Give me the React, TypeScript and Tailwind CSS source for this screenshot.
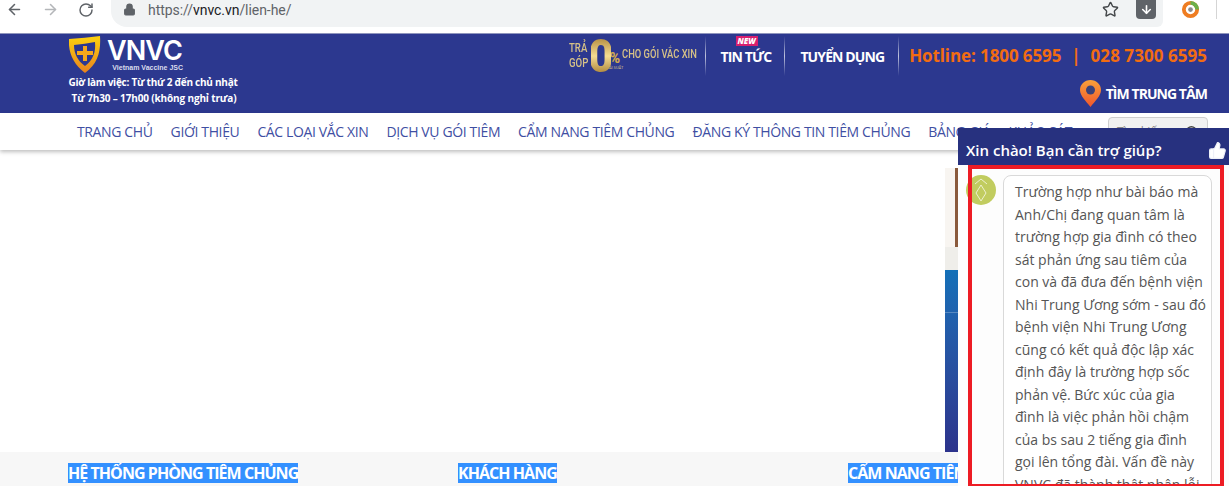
import React from "react";
import { ArrowLeft, ArrowRight, RotateCw, Lock, Star, ArrowDown, Search, ThumbsUp } from "lucide-react";

const navItems = [
  "TRANG CHỦ",
  "GIỚI THIỆU",
  "CÁC LOẠI VẮC XIN",
  "DỊCH VỤ GÓI TIÊM",
  "CẨM NANG TIÊM CHỦNG",
  "ĐĂNG KÝ THÔNG TIN TIÊM CHỦNG",
  "BẢNG GIÁ",
  "KHẢO SÁT",
];

const chatLines = [
  "Trường hợp như bài báo mà",
  "Anh/Chị đang quan tâm là",
  "trường hợp gia đình có theo",
  "sát phản ứng sau tiêm của",
  "con và đã đưa đến bệnh viện",
  "Nhi Trung Ương sớm - sau đó",
  "bệnh viện Nhi Trung Ương",
  "cũng có kết quả độc lập xác",
  "định đây là trường hợp sốc",
  "phản vệ. Bức xúc của gia",
  "đình là việc phản hồi chậm",
  "của bs sau 2 tiếng gia đình",
  "gọi lên tổng đài. Vấn đề này",
  "VNVC đã thành thật nhận lỗi",
];

const footerCols = ["HỆ THỐNG PHÒNG TIÊM CHỦNG", "KHÁCH HÀNG", "CẨM NANG TIÊM CHỦNG"];

const Shield = () => (
  <svg width="32" height="37" viewBox="0 0 32 37" className="shrink-0 ml-[1px]">
    <defs>
      <linearGradient id="shieldGold" x1="0" y1="0" x2="0" y2="1">
        <stop offset="0" stopColor="#fdd20e" />
        <stop offset="1" stopColor="#e8821e" />
      </linearGradient>
    </defs>
    <path d="M0 3 Q16 2 31 0 C32 15 29 28 16 37 C4 28 -1 16 0 3 Z" fill="url(#shieldGold)" />
    <path d="M5 9 Q16 8 26 6 C27 16 24 24 16 30 C9 25 5 18 5 9 Z" fill="#2c388f" />
    <path d="M14 10 h4 v5 h6 v4 h-6 v6 h-4 v-6 h-6 v-4 h6 Z" fill="#f5a81c" />
  </svg>
);

const Pin = () => (
  <svg width="21" height="27" viewBox="0 0 21 27" className="shrink-0">
    <defs>
      <linearGradient id="pinGrad" x1="0" y1="0" x2="0" y2="1">
        <stop offset="0" stopColor="#f9a13a" />
        <stop offset="1" stopColor="#f0562c" />
      </linearGradient>
    </defs>
    <path d="M10.5 0 C4.5 0 0 4.5 0 10 C0 16 6 21 10.5 27 C15 21 21 16 21 10 C21 4.5 16.5 0 10.5 0 Z" fill="url(#pinGrad)" />
    <circle cx="10.5" cy="10" r="4.5" fill="#3b4279" />
  </svg>
);

const ExtensionIcon = () => (
  <svg width="19" height="19" viewBox="0 0 20 20">
    <circle cx="10" cy="10" r="7" fill="none" stroke="#ef7d22" strokeWidth="4" />
    <path d="M10 3 A7 7 0 0 1 17 10" fill="none" stroke="#6bb04a" strokeWidth="4" />
    <circle cx="10" cy="10" r="2.5" fill="#8a8a8a" />
  </svg>
);

const AvatarMark = () => (
  <svg width="14" height="24" viewBox="0 0 14 24" fill="none" stroke="#eef0cf" strokeWidth="1">
    <path d="M1 6 L7 1 L13 6" />
    <path d="M7 7 L12 15 L7 23 L2 15 Z" />
  </svg>
);

const Divider = () => (
  <div className="w-px h-10 bg-gradient-to-b from-transparent via-white/70 to-transparent shrink-0" />
);

const BrowserBar = () => (
  <div className="h-[33px] bg-white flex items-start text-[#5f6368] shrink-0">
    <div className="flex items-center h-[19px] pl-[6px] w-[111px] shrink-0">
      <ArrowLeft size={17} strokeWidth={2.2} />
      <ArrowRight size={17} strokeWidth={2.2} className="ml-[19px] text-[#b4b6b9]" />
      <RotateCw size={16} strokeWidth={2.2} className="ml-[19px]" />
    </div>
    <div className="w-[1052px] h-[27px] bg-[#f1f3f4] rounded-bl-2xl rounded-br-md flex items-start shrink-0">
      <Lock size={13} fill="#5f6368" className="ml-[12px] mt-[3px]" />
      <span className="ml-[12px] mt-[1px] text-[14px] leading-[18px] tracking-[-0.05px] font-['Roboto',sans-serif]">
        https://<span className="text-[#202124]">vnvc.vn</span>/lien-he/
      </span>
      <Star size={17} strokeWidth={2} className="ml-auto mt-[1px] mr-[17px] text-[#44474a]" />
      <div className="w-5 h-[19px] bg-[#5f6368] rounded-b-sm flex items-center justify-center mr-[7px]">
        <ArrowDown size={13} strokeWidth={3} className="text-white" />
      </div>
    </div>
    <div className="ml-[18px] h-[19px] flex items-center">
      <ExtensionIcon />
    </div>
    <div className="ml-[16px] w-px h-[19px] bg-[#d5d5d5]" />
  </div>
);

const TopHeader = () => (
  <div className="h-[80px] bg-[#2c388f] border-t border-[#8f95bd] flex justify-between shrink-0 text-white font-['Open_Sans',sans-serif]">
    <div className="ml-[68px] pt-[2px]">
      <div className="flex items-start h-[38px]">
        <Shield />
        <div className="ml-[6px] w-[76px]">
          <div className="text-[27px] leading-[26px] font-semibold tracking-[-0.9px] font-['Inter',sans-serif] mt-[2px]">VNVC</div>
          <div className="text-[7px] leading-[8px] font-bold text-right text-[#d9dcec] font-['Liberation_Sans',sans-serif] whitespace-nowrap">Vietnam Vaccine JSC</div>
        </div>
      </div>
      <div className="text-[10px] leading-[16px] font-bold text-center tracking-[-0.25px] whitespace-nowrap w-[170px]">
        <div>Giờ làm việc: Từ thứ 2 đến chủ nhật</div>
        <div className="pl-[2px] tracking-[-0.14px]">Từ 7h30 – 17h00 (không nghỉ trưa)</div>
      </div>
    </div>
    <div className="pr-[22px] flex flex-col items-end">
      <div className="flex items-center h-[42px] mt-[1px]">
        <div className="flex items-center text-[#d6c187] font-['Roboto',sans-serif] w-[128px] h-[36px]">
          <div className="text-[12px] leading-[15px] text-center scale-x-[.8] font-medium w-[20px] shrink-0 -ml-[1px]">TRẢ<br />GÓP</div>
          <span className="ml-[3px] w-[22px] flex justify-center shrink-0 scale-x-95 text-[46px] leading-[38px] font-black bg-gradient-to-b from-[#b08a3c] via-[#f5dc92] to-[#a87f30] bg-clip-text text-transparent">0</span>
          <div className="flex flex-col items-center w-[13px] shrink-0 -ml-[3px] mt-[8px]">
            <span className="text-[14px] leading-[14px] font-black text-[#d0a850]">%</span>
            <span className="text-[4px] leading-[5px] whitespace-nowrap">LÃI SUẤT</span>
          </div>
          <span className="text-[12px] ml-[3px] mb-[4px] w-[69px] shrink-0 scale-x-[.78] whitespace-nowrap font-medium flex justify-center">CHO GÓI VẮC XIN</span>
        </div>
        <div className="ml-[9px]"><Divider /></div>
        <div className="relative ml-[15px] text-[14px] font-bold tracking-[-0.9px] whitespace-nowrap">
          TIN TỨC
          <span className="absolute -top-[10px] left-[15px] bg-[#d81f6e] text-white text-[8px] leading-[10px] font-black px-[2px] tracking-normal italic">NEW</span>
        </div>
        <div className="ml-[13px]"><Divider /></div>
        <div className="ml-[15px] text-[14px] font-bold tracking-[-0.9px] whitespace-nowrap">TUYỂN DỤNG</div>
        <div className="ml-[14px]"><Divider /></div>
        <div className="ml-[10px] text-[#f26c12] text-[17px] font-bold flex whitespace-nowrap tracking-[-0.1px]">
          <span>Hotline: 1800 6595</span>
          <span className="mx-[10px]">|</span>
          <span className="tracking-[0.05px]">028 7300 6595</span>
        </div>
      </div>
      <div className="flex items-center mt-[3px]">
        <Pin />
        <span className="ml-[5px] mb-[1px] text-[14px] font-bold tracking-[-0.95px] whitespace-nowrap">TÌM TRUNG TÂM</span>
      </div>
    </div>
  </div>
);

const NavBar = () => (
  <div className="h-[37px] bg-white shadow-[0_2px_4px_rgba(0,0,0,0.25)] flex items-center pl-[77px] pr-[21px] shrink-0 relative font-['Open_Sans',sans-serif]">
    <div className="flex gap-[18px] text-[14px] tracking-[-0.37px] text-[#3f4fa3] whitespace-nowrap">
      {navItems.map((item) => (
        <span key={item}>{item}</span>
      ))}
    </div>
    <div className="ml-auto w-[100px] h-[30px] shrink-0 bg-[#f1f1f1] border border-[#cfcfcf] rounded flex items-center justify-between px-[8px] text-[12px] text-[#888]">
      <span>Tìm kiếm</span>
      <Search size={14} strokeWidth={2.5} className="text-[#444]" />
    </div>
  </div>
);

const Footer = () => (
  <div className="h-[34px] bg-[#f7f7f7] grid grid-cols-[390px_390px_390px] pl-[68px] pt-[11px] overflow-hidden shrink-0 font-['Open_Sans',sans-serif]">
    {footerCols.map((title) => (
      <div key={title} className="bg-[#3390ff] w-fit h-[20px] text-white text-[16px] leading-[20px] font-bold tracking-[-0.95px] whitespace-nowrap">
        {title}
      </div>
    ))}
  </div>
);

const ChatWidget = () => (
  <div className="absolute left-[958px] top-[128px] w-[271px] h-[358px] bg-[#fdfdfd] overflow-hidden font-['Open_Sans',sans-serif]">
    <div className="h-[37px] bg-[#27317f] flex items-center justify-between pl-[8px] pr-[2px] pt-[7px] text-white">
      <span className="text-[15px] font-semibold">Xin chào! Bạn cần trợ giúp?</span>
      <ThumbsUp size={19} fill="#fff" strokeWidth={1.5} className="text-[#eef0f8]" />
    </div>
    <div className="flex items-start pt-[10px] pl-[8px]">
      <div className="w-[30px] h-[30px] rounded-full bg-[#c1cc5f] flex items-center justify-center shrink-0">
        <AvatarMark />
      </div>
      <div className="ml-[7px] w-[209px] shrink-0 bg-white border border-[#d9d9d9] rounded-lg pl-[11px] pt-[5px] text-[14px] leading-[22.5px] text-[#555] whitespace-nowrap">
        {chatLines.map((line) => (
          <div key={line}>{line}</div>
        ))}
      </div>
    </div>
    <div className="absolute left-[10px] top-[37px] w-[256px] h-[321px] border-4 border-b-2 border-[#ed1c24]" />
  </div>
);

// strip of the page banner still visible to the left of the chat box
const BannerStrip = () => (
  <div className="absolute left-[945px] top-[168px] w-[13px] h-[284px] flex flex-col">
    <div className="h-[79px] bg-[#f8f5f1] flex justify-end">
      <div className="w-[3px] bg-[#8a5a3c]" />
    </div>
    <div className="h-[23px] bg-[#efeeea]" />
    <div className="flex-1 bg-gradient-to-b from-[#1370b8] to-[#2c338c] pt-[42px]">
      <div className="h-px bg-white/25" />
    </div>
  </div>
);

export default function App() {
  return (
    <div className="relative w-[1229px] h-[486px] overflow-hidden bg-white flex flex-col">
      <BrowserBar />
      <TopHeader />
      <NavBar />
      <div className="flex-1" />
      <Footer />
      <BannerStrip />
      <ChatWidget />
    </div>
  );
}
